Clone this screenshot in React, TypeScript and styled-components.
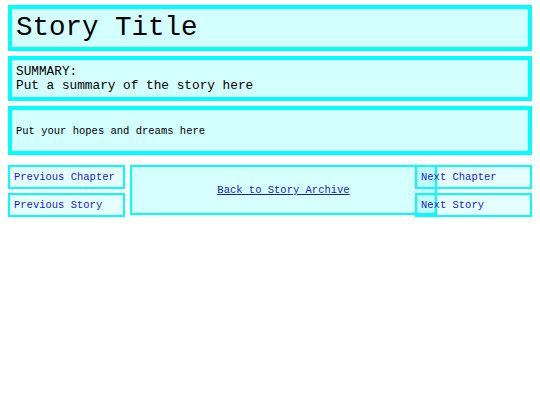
import styled, { createGlobalStyle } from 'styled-components';

const GlobalStyle = createGlobalStyle`
  html, body {
    margin: 0;
    background: #ffffff;
  }

  body {
    padding: 5px 8px;
    font-family: "Liberation Mono", "DejaVu Sans Mono", monospace;
    color: #000000;
  }
`;

const StyledPage = styled.main`
  display: flex;
  flex-direction: column;
  gap: 5px;
`;

const StyledPanel = styled.section`
  box-sizing: border-box;
  border: 4px solid #00ffff;
  background-color: #d4ffff;
`;

const StyledTitle = styled.h1`
  margin: 0;
  padding: 0 4px;
  font-size: 27.5px;
  font-weight: normal;
  line-height: 38px;
`;

const StyledSummary = styled.div`
  padding: 5px 4px 4px;
  font-size: 12.75px;
  line-height: 14px;
`;

const StyledBody = styled.p`
  margin: 0;
  padding: 15px 4px 14px;
  font-size: 10.5px;
  line-height: 12px;
`;

const StyledNav = styled.nav`
  display: grid;
  grid-template-columns: 117px 1fr 117px;
  margin-top: 5px;
  align-items: start;
`;

const StyledNavColumn = styled.div`
  display: flex;
  flex-direction: column;
  gap: 4px;
`;

const StyledNavBox = styled.div`
  box-sizing: border-box;
  height: 24px;
  padding: 0 4px;
  display: flex;
  align-items: center;
  border: 2px solid #00ffff;
  background-color: rgba(0, 255, 255, 0.1);
`;

const StyledNavLink = styled.a`
  font-size: 10.5px;
  color: #2020cc;
  text-decoration: none;
`;

const StyledArchive = styled.div<{ $overhang: number }>`
  box-sizing: border-box;
  height: 50px;
  margin-left: 5px;
  margin-right: -${(p) => p.$overhang}px;
  display: flex;
  align-items: center;
  justify-content: center;
  border: 2px solid #00ffff;
  background-color: rgba(180, 255, 255, 0.55);
`;

const StyledArchiveLink = styled.a`
  font-size: 10.5px;
  color: #1c1cbb;
  text-decoration: underline;
`;

const App = () => {
  return (
    <>
      <GlobalStyle />
      <StyledPage>
        <StyledPanel>
          <StyledTitle>Story Title</StyledTitle>
        </StyledPanel>

        <StyledPanel>
          <StyledSummary>
            SUMMARY:
            <br />
            Put a summary of the story here
          </StyledSummary>
        </StyledPanel>

        <StyledPanel>
          <StyledBody>Put your hopes and dreams here</StyledBody>
        </StyledPanel>

        <StyledNav>
          <StyledNavColumn>
            <StyledNavBox>
              <StyledNavLink href="#">Previous Chapter</StyledNavLink>
            </StyledNavBox>
            <StyledNavBox>
              <StyledNavLink href="#">Previous Story</StyledNavLink>
            </StyledNavBox>
          </StyledNavColumn>

          <StyledArchive $overhang={22}>
            <StyledArchiveLink href="#">Back to Story Archive</StyledArchiveLink>
          </StyledArchive>

          <StyledNavColumn>
            <StyledNavBox>
              <StyledNavLink href="#">Next Chapter</StyledNavLink>
            </StyledNavBox>
            <StyledNavBox>
              <StyledNavLink href="#">Next Story</StyledNavLink>
            </StyledNavBox>
          </StyledNavColumn>
        </StyledNav>
      </StyledPage>
    </>
  );
};

export default App;
